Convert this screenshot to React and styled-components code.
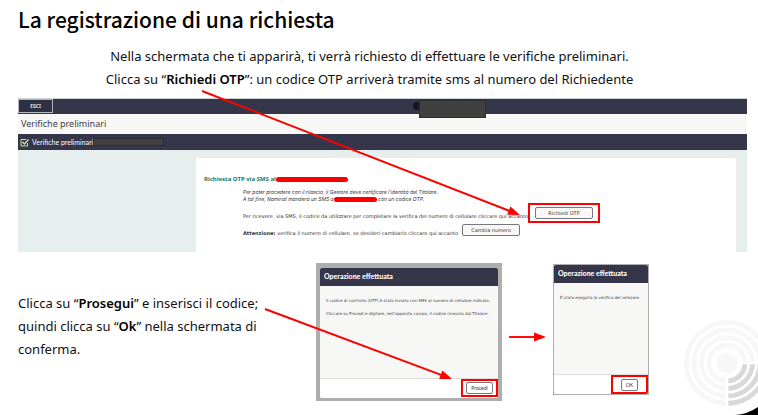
import React from 'react';
import styled, { createGlobalStyle } from 'styled-components';

const GlobalStyle = createGlobalStyle`
  * {
    box-sizing: border-box;
  }

  body {
    margin: 0;
    background: #fff;
    color: #111;
    font-family: 'Noto Sans', 'Open Sans', sans-serif;
  }

  h1, h2, h3, p {
    margin: 0;
  }

  button {
    font-family: inherit;
    cursor: pointer;
  }
`;

const Slide = styled.main`
  position: relative;
  min-height: 100vh;
  padding: 6px 11px 0 18px;
  overflow: hidden;
`;

const Title = styled.h1`
  font-family: 'Noto Sans CJK SC', 'Noto Sans', sans-serif;
  font-size: 21px;
  font-weight: 500;
  line-height: 26px;
  color: #000;
`;

const Copy = styled.p`
  font-size: 13px;
  line-height: 23px;

  strong {
    font-weight: 600;
    color: #000;
  }
`;

const Intro = styled(Copy)`
  margin: 13px 0 7px;
  padding-right: 26px;
  text-align: center;
`;

const Portal = styled.section`
  border-top: 1px solid #c9d2d4;
`;

const TopBar = styled.header`
  display: flex;
  justify-content: space-between;
  height: 15px;
  background: #36364a;
`;

const ExitButton = styled.button`
  width: 35px;
  height: 14px;
  padding: 0;
  border: 1px solid #b5b5bd;
  background: #303044;
  color: #fff;
  font-size: 5px;
  font-weight: 600;
  line-height: 10px;
`;

const Account = styled.div`
  display: flex;
  align-items: flex-start;
  margin-right: 261px;
`;

const Avatar = styled.span`
  width: 8px;
  height: 8px;
  margin: 3px -2px 0 0;
  border-radius: 50%;
  background: #171722;
`;

const Redaction = styled.span`
  flex: none;
  width: ${props => props.$width}px;
  height: ${props => props.$height}px;
  border: 1px solid #2b2b30;
  background: #404040;
`;

const AccountName = styled(Redaction)`
  position: relative;
  margin-top: 1px;
`;

const PageHeading = styled.h2`
  height: 20px;
  padding-left: 3px;
  background: #f7f7f5;
  color: #3f3f46;
  font-size: 9px;
  font-weight: 400;
  line-height: 20px;
`;

const StepBar = styled.div`
  display: flex;
  align-items: center;
  height: 16px;
  padding-left: 2px;
  background: #36364a;
  color: #fff;
  font-family: Lato, sans-serif;
  font-size: 7px;

  svg {
    margin-right: 3px;
  }
`;

const PortalBody = styled.div`
  padding: 8px 11px 0 178px;
  background: #e6efee;
`;

const Panel = styled.div`
  height: 94px;
  padding: 16px 8px 0;
  border-radius: 2px 2px 0 0;
  background: #fff;
  color: #333;
  font-family: Inter, sans-serif;
  font-size: 5px;
  line-height: 7px;
`;

const PanelTitle = styled.h3`
  display: flex;
  align-items: center;
  height: 10px;
  color: #16786f;
  font-family: 'Noto Sans', sans-serif;
  font-size: 6px;
  font-weight: 700;
`;

const Scribble = styled.span`
  display: inline-block;
  width: ${props => props.$width}px;
  height: 5px;
  border-radius: 3px;
  background: #f00;
  vertical-align: middle;
`;

const Note = styled.p`
  margin: 5px 0 0 39px;
  font-style: italic;
`;

const Actions = styled.div`
  margin-top: 1px;
  font-family: 'DejaVu Sans', sans-serif;
`;

const ActionRow = styled.div`
  display: flex;
  align-items: center;
  height: 17px;
  margin-left: 39px;
  gap: ${props => props.$gap || 0}px;
  white-space: nowrap;
`;

const ActionText = styled.span`
  padding-top: 8px;
`;

const PillButton = styled.button`
  width: ${props => props.$width}px;
  height: 12px;
  padding: 0;
  border: 1px solid #77777f;
  border-radius: 2px;
  background: ${props => props.$background || '#f8f8f7'};
  color: #333;
  font-size: 5px;
  line-height: 8px;
`;

const Highlight = styled.span`
  display: flex;
  align-items: center;
  justify-content: center;
  flex: none;
  width: ${props => props.$width}px;
  height: ${props => props.$height}px;
  border: 2px solid #f00;
`;

const Steps = styled.section`
  display: flex;
  align-items: flex-start;
  padding-top: 11px;
`;

const StepsCopy = styled(Copy)`
  width: 245px;
  margin: 29px 53px 0 0;
  white-space: nowrap;
`;

const DialogFrame = styled.div`
  flex: none;
  width: ${props => props.$width}px;
  padding: ${props => props.$pad};
  margin: ${props => props.$margin || 0};
  background: #aeaeae;
`;

const Dialog = styled.div`
  border-radius: 2px;
  background: #f7f7f5;
  font-family: Lato, sans-serif;
  overflow: hidden;
`;

const DialogTitle = styled.h3`
  height: 18px;
  padding-left: 4px;
  background: #36364a;
  color: #fff;
  font-size: 7px;
  font-weight: 900;
  line-height: 17px;
`;

const DialogBody = styled.div`
  height: ${props => props.$height}px;
  padding: 8px 0 0 6px;
  color: #444;
  font-family: 'DejaVu Sans', sans-serif;
  font-size: 4px;
  line-height: 13px;
  white-space: nowrap;
`;

const DialogFooter = styled.div`
  display: flex;
  justify-content: flex-end;
  height: 20px;
  border-top: 1px solid #ddd;
  background: #fff;
`;

const Arrows = styled.svg`
  position: absolute;
  top: 0;
  left: 0;
  pointer-events: none;
`;

const Emblem = styled.svg`
  position: absolute;
  right: 0;
  bottom: 0;
`;

const RINGS = [18, 25.5, 33, 40.5];

const CheckIcon = () => (
  <svg width="9" height="9" viewBox="0 0 9 9" fill="none" aria-hidden="true">
    <path d="M7.5 5v3h-6.5V1.5H6" stroke="#c9e3a0" />
    <path d="M2.5 4l2 2L8.5 1.5" stroke="#c9e3a0" strokeWidth="1.5" />
  </svg>
);

const Arrow = ({ from, to, head = 12 }) => {
  const angle = Math.atan2(to[1] - from[1], to[0] - from[0]);
  const degrees = (angle * 180) / Math.PI;
  const endX = to[0] - Math.cos(angle) * (head - 1);
  const endY = to[1] - Math.sin(angle) * (head - 1);

  return (
    <g stroke="none" fill="#f00">
      <line x1={from[0]} y1={from[1]} x2={endX} y2={endY} stroke="#f00" strokeWidth="1.9" />
      <polygon
        points={`0,0 ${-head},-4.5 ${-head},4.5`}
        transform={`translate(${to[0]} ${to[1]}) rotate(${degrees})`}
      />
    </g>
  );
};

const App = () => (
  <>
    <GlobalStyle />
    <Slide>
      <Title>La registrazione di una richiesta</Title>
      <Intro>
        Nella schermata che ti apparirà, ti verrà richiesto di effettuare le verifiche preliminari.
        <br />
        Clicca su “<strong>Richiedi OTP</strong>”: un codice OTP arriverà tramite sms al numero del
        Richiedente
      </Intro>

      <Portal>
        <TopBar>
          <ExitButton type="button">ESCI</ExitButton>
          <Account>
            <Avatar />
            <AccountName $width={67} $height={18} />
          </Account>
        </TopBar>
        <PageHeading>Verifiche preliminari</PageHeading>
        <StepBar>
          <CheckIcon />
          Verifiche preliminari
          <Redaction $width={71} $height={8} />
        </StepBar>
        <PortalBody>
          <Panel>
            <PanelTitle>
              Richiesta OTP via SMS al
              <Scribble $width={72} />
            </PanelTitle>
            <Note>
              Per poter procedere con il rilascio, il Gestore deve certificare l’identità del Titolare.
              <br />A tal fine, Namirial manderà un SMS a<Scribble $width={43} /> con un codice OTP.
            </Note>
            <Actions>
              <ActionRow>
                <ActionText>
                  Per ricevere, via SMS, il codice da utilizzare per completare la verifica del numero
                  di cellulare cliccare qui accanto
                </ActionText>
                <Highlight $width={72} $height={20}>
                  <PillButton type="button" $width={58}>
                    Richiedi OTP
                  </PillButton>
                </Highlight>
              </ActionRow>
              <ActionRow $gap={4}>
                <ActionText>
                  <b>Attenzione:</b> verifica il numero di cellulare, se desideri cambiarlo cliccare qui
                  accanto
                </ActionText>
                <PillButton type="button" $width={58}>
                  Cambia numero
                </PillButton>
              </ActionRow>
            </Actions>
          </Panel>
        </PortalBody>
      </Portal>

      <Steps>
        <StepsCopy>
          Clicca su “<strong>Prosegui</strong>” e inserisci il codice;
          <br />
          quindi clicca su “<strong>Ok</strong>” nella schermata di
          <br />
          conferma.
        </StepsCopy>
        <DialogFrame $width={186} $pad="5px 4px 3px">
          <Dialog>
            <DialogTitle>Operazione effettuata</DialogTitle>
            <DialogBody $height={92}>
              Il codice di controllo (OTP) è stato inviato con SMS al numero di cellulare indicato.
              <br />
              Cliccare su Procedi e digitare, nell’apposito campo, il codice ricevuto dal Titolare.
            </DialogBody>
            <DialogFooter>
              <Highlight $width={37} $height={18}>
                <PillButton type="button" $width={27} $background="#fff">
                  Procedi
                </PillButton>
              </Highlight>
            </DialogFooter>
          </Dialog>
        </DialogFrame>
        <DialogFrame $width={96} $pad="1px" $margin="1px 0 0 51px">
          <Dialog>
            <DialogTitle>Operazione effettuata</DialogTitle>
            <DialogBody $height={91}>È stata eseguita la verifica del cellulare.</DialogBody>
            <DialogFooter>
              <Highlight $width={37} $height={19}>
                <PillButton type="button" $width={17} $background="#fff">
                  OK
                </PillButton>
              </Highlight>
            </DialogFooter>
          </Dialog>
        </DialogFrame>
      </Steps>

      <Arrows width="758" height="415" viewBox="0 0 758 415" aria-hidden="true">
        <Arrow from={[202, 91]} to={[520, 215]} />
        <Arrow from={[265, 309]} to={[452, 379]} />
        <Arrow from={[509, 337]} to={[546, 337]} />
      </Arrows>

      <Emblem width="80" height="100" viewBox="0 0 80 100" aria-hidden="true">
        <g fill="none" strokeWidth="4.8" transform="translate(49 48)">
          <circle r="10.5" fill="#f7f7f7" />
          {RINGS.map(r => (
            <circle key={r} r={r} stroke="#f7f7f7" />
          ))}
          <path d="M0 14H45V45H0z" fill="#fff" />
          <path d="M14 0H45V45H14z" fill="#fff" />
          {RINGS.map(r => (
            <path key={r} d={`M${r} 0A${r} ${r} 0 0 1 0 ${r}`} stroke="#d9d9d9" />
          ))}
          <path d="M0 14V45M14 0H45" stroke="#fff" strokeWidth="2.6" />
        </g>
        <path d="M57 100Q70 99 80 92V100z" fill="#000" />
      </Emblem>
    </Slide>
  </>
);

export default App;
